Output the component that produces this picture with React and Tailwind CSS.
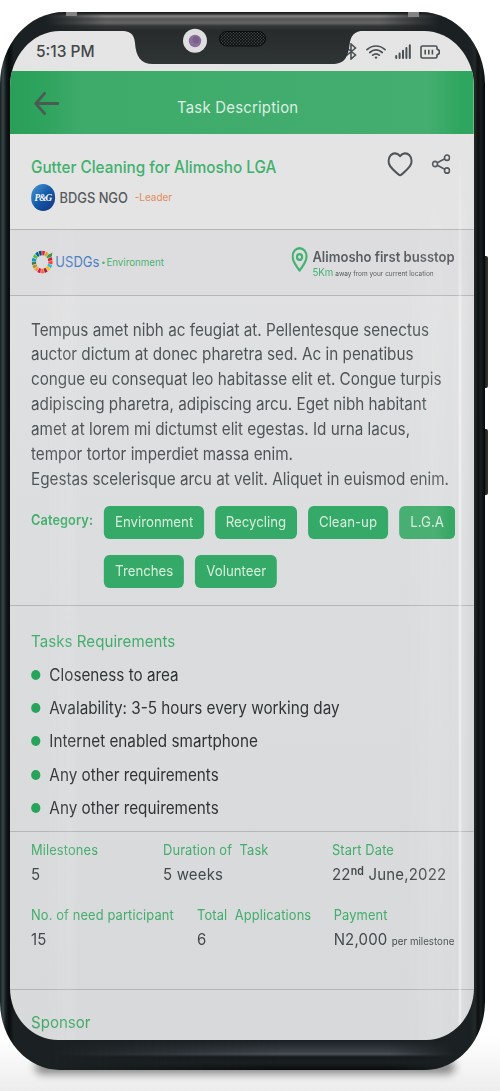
import React from 'react';

const SDG_COLORS = ['#e5243b', '#dda63a', '#4c9f38', '#c5192d', '#ff3a21', '#26bde2', '#fcc30b', '#a21942', '#fd6925', '#dd1367', '#fd9d24', '#bf8b2e', '#3f7e44', '#0a97d9', '#56c02b', '#00689d', '#19486a'];

const PARAGRAPH = [
  'Tempus amet nibh ac feugiat at. Pellentesque senectus',
  'auctor dictum at donec pharetra sed. Ac in penatibus',
  'congue eu consequat leo habitasse elit et. Congue turpis',
  'adipiscing pharetra, adipiscing arcu. Eget nibh habitant',
  'amet at lorem mi dictumst elit egestas. Id urna lacus,',
  'tempor tortor imperdiet massa enim.',
  'Egestas scelerisque arcu at velit. Aliquet in euismod enim.',
];

const REQUIREMENTS = [
  'Closeness to area',
  'Avalability: 3-5 hours every working day',
  'Internet enabled smartphone',
  'Any other requirements',
  'Any other requirements',
];

function SdgWheel() {
  const c = 2 * Math.PI * 9;
  const seg = c / 17;
  return (
    <svg className="w-[24px] h-[24px] shrink-0" viewBox="0 0 24 24" preserveAspectRatio="none" fill="none">
      {SDG_COLORS.map((color, i) => (
        <circle key={color} cx="12" cy="12" r="9" stroke={color} strokeWidth="4.6"
          strokeDasharray={`${seg - 0.6} ${c - seg + 0.6}`} transform={`rotate(${(i * 360) / 17 - 90} 12 12)`} />
      ))}
      <path d="M18 5.5L23 2.5L22.5 6.5L19.5 7.5Z" fill="#3f8f45" />
    </svg>
  );
}

function Notch() {
  return (
    <svg className="absolute left-[115px] top-[18px] w-[250px] h-[36px] overflow-visible" viewBox="115 30 250 36">
      <defs>
        <linearGradient id="notch" x1="0" y1="0" x2="0" y2="1">
          <stop offset="0" stopColor="#272b2b" />
          <stop offset="1" stopColor="#2f3435" />
        </linearGradient>
        <pattern id="mesh" width="3" height="3" patternUnits="userSpaceOnUse">
          <rect width="3" height="3" fill="#0b0d0d" />
          <circle cx="0.8" cy="0.8" r="0.7" fill="#4b4f4f" />
          <circle cx="2.3" cy="2.3" r="0.7" fill="#4b4f4f" />
        </pattern>
      </defs>
      <path d="M118 30.5C130 31 134 33 135 43C136 57 141 64 153 64H332C345 64 348 57 349.5 45C350.5 36 354 31 364 30.5Z" fill="url(#notch)" />
      <circle cx="195" cy="40.7" r="12" fill="#dedddf" />
      <circle cx="195" cy="41" r="6.2" fill="#8b6f9b" />
      <circle cx="196" cy="40" r="3.4" fill="#79608b" />
      <rect x="219.5" y="31.5" width="46" height="14.5" rx="7.2" fill="url(#mesh)" stroke="#0b0d0d" strokeWidth="1" />
    </svg>
  );
}

function StatusBar() {
  return (
    <div className="relative h-[40px] flex items-start justify-between pl-[26px] pr-[34px] pt-[11px]">
      <span className="text-[15.5px] leading-[20px] font-medium text-[#43474a]">5:13 PM</span>
      <div className="flex items-center h-[20px] gap-[9px] text-[#4b5054]">
        <svg className="w-[11px] h-[17px]" viewBox="0 0 11 17" fill="none" stroke="currentColor" strokeWidth="1.6">
          <path d="M0.5 4.5L9.5 12L5 16V1L9.5 5L0.5 12.5" />
        </svg>
        <svg className="w-[20px] h-[14px]" viewBox="0 0 20 14" fill="none" stroke="currentColor" strokeWidth="1.7" strokeLinecap="round">
          <path d="M1 4.6C6.2-0.2 13.8-0.2 19 4.6M3.8 7.5C7.5 4.1 12.5 4.1 16.2 7.5M6.7 10.2C8.7 8.5 11.3 8.5 13.3 10.2" />
          <circle cx="10" cy="12.6" r="1.2" fill="currentColor" stroke="none" />
        </svg>
        <svg className="w-[16px] h-[15px]" viewBox="0 0 16 15" fill="none" stroke="currentColor" strokeWidth="2" strokeLinecap="round">
          <path d="M1.2 14V12M4.6 14V9.5M8 14V6.8M11.4 14V4M14.8 14V1.2" />
        </svg>
        <svg className="w-[20px] h-[14px]" viewBox="0 0 20 14" fill="none" stroke="currentColor" strokeWidth="1.6" strokeLinejoin="round">
          <path d="M2.5 1H15.5Q17 1 17 2.5V4L19.2 5.5V8.5L17 10V11.5Q17 13 15.5 13H2.5Q1 13 1 11.5V2.5Q1 1 2.5 1Z" />
          <path d="M5.2 4.7V9.5M8.8 4.7V9.5M12.4 4.7V9.5" />
        </svg>
      </div>
    </div>
  );
}

function Chip({ children, className }) {
  return (
    <span className={`flex items-center justify-center h-[33.5px] rounded-[6px] bg-[#35a967] text-[#d5eddd] text-[14.4px] ${className}`}>
      {children}
    </span>
  );
}

function Stat({ label, className, children }) {
  return (
    <div className={className}>
      <div className="text-[14px] leading-[24px] tracking-[0.13px] text-[#43ad6c]">{label}</div>
      <div className="text-[16.3px] leading-[24px] tracking-[0.2px] text-[#43494c]">{children}</div>
    </div>
  );
}

function Screen() {
  return (
    <div className="relative ml-[10px] w-[464px] h-[1009.5px] overflow-hidden rounded-t-[50px_56px] rounded-b-[48px_52px] bg-linear-to-b from-[#e5e5e5] via-[#dcdddf] to-[#d7d9da]">
      <StatusBar />
      <div className="w-[504.35px] origin-top-left scale-x-[0.92] whitespace-nowrap">
        <header className="relative h-[63.5px] bg-[linear-gradient(90deg,#2a9f59_0px,#2ea35d_35px,#3fab6b_80px,#43ae6f_455px,#2fa65f_490px)] flex items-center pl-[26px]">
          <svg className="w-[28px] h-[25px] mt-[3px]" viewBox="0 0 29 26" preserveAspectRatio="none" fill="none" stroke="#4b5a52" strokeWidth="3" strokeLinecap="round" strokeLinejoin="round">
            <path d="M27 13H2M12 2.5L2 13L12 23.5" />
          </svg>
          <h1 className="ml-[127.5px] mt-[10px] text-[16.2px] tracking-[0.25px] text-[#dcefe2]">Task Description</h1>
        </header>

        <section className="h-[95.5px] bg-[#e4e4e4] border-b border-[#b5b5b7] pl-[22.8px] pr-[25px] pt-[16.5px]">
          <div className="flex justify-between">
            <h2 className="mt-[4px] text-[16.6px] leading-[24px] tracking-[0.03px] font-medium text-[#40b16d]">Gutter Cleaning for Alimosho LGA</h2>
            <div className="flex items-center h-[27px] gap-[20px] text-[#50565a]">
              <svg className="w-[28px] h-[25px]" viewBox="0 0 28 25" preserveAspectRatio="none" fill="none" stroke="currentColor" strokeWidth="2.2" strokeLinejoin="round">
                <path d="M14 4.2C11.5 0.8 6.5 0.5 3.8 3.3C0.8 6.3 0.8 11 3.3 14.2C6 17.8 10 20.5 12.6 22.6Q14 23.6 15.4 22.6C18 20.5 22 17.8 24.7 14.2C27.2 11 27.2 6.3 24.2 3.3C21.5 0.5 16.5 0.8 14 4.2Z" />
              </svg>
              <svg className="w-[21px] h-[20px]" viewBox="0 0 21 20" preserveAspectRatio="none" fill="none" stroke="currentColor" strokeWidth="1.7">
                <circle cx="4" cy="10" r="2.7" /><circle cx="17" cy="3.7" r="2.7" /><circle cx="17" cy="16.5" r="2.7" />
                <path d="M6.4 8.8L14.6 4.8M6.4 11.2L14.6 15.3" />
              </svg>
            </div>
          </div>
          <div className="flex items-center h-[27px] mt-[5.5px]">
            <span className="flex items-center justify-center w-[26px] h-[26.5px] rounded-full bg-linear-to-br from-[#4f9bd4] via-[#1459a9] to-[#12307f] text-white font-['Liberation_Serif',serif] italic font-bold text-[10px] tracking-[-1px]">P&amp;G</span>
            <span className="ml-[5px] text-[14px] font-medium text-[#54595c]">BDGS NGO</span>
            <span className="ml-[7.5px] mt-[1px] text-[10.8px] text-[#e58a59]">-Leader</span>
          </div>
        </section>

        <section className="h-[66px] border-b border-[#b5b6b8] bg-[#dddddf] flex items-center justify-between pl-[22.8px] pr-[21px]">
          <div className="flex items-center">
            <SdgWheel />
            <span className="ml-[2.5px] text-[14.2px] text-[#4a7fc4]">USDGs</span>
            <span className="ml-[2px] mt-[1px] text-[10.6px] text-[#4bb374]"><span className="mr-[1px] text-[8px] align-[1px]">•</span>Environment</span>
          </div>
          <div className="flex items-start gap-[5px]">
            <svg className="w-[17.5px] h-[25px] mt-[5px]" viewBox="0 0 18 25" preserveAspectRatio="none" fill="none" stroke="#43b272" strokeWidth="2.4">
              <path d="M9 23.5C6.5 20 1.2 15.5 1.2 9.5C1.2 4.5 4.7 1.2 9 1.2S16.8 4.5 16.8 9.5C16.8 15.5 11.5 20 9 23.5Z" strokeLinejoin="round" />
              <circle cx="9" cy="10" r="2.9" />
            </svg>
            <div className="pt-[6.5px]">
              <div className="text-[14.2px] leading-[17px] font-semibold text-[#5a5e62]">Alimosho first busstop</div>
              <div className="text-[7.1px] leading-[16px] text-[#565a5d]"><span className="text-[10.6px] text-[#43b272]">5Km</span> away from your current location</div>
            </div>
          </div>
        </section>

        <section className="h-[310px] border-b border-[#b5b6b8] pl-[22.8px] pt-[22px]">
          <div className="text-[16.6px] leading-[24.85px] text-[#4e5457]">
            {PARAGRAPH.map((line) => <div key={line}>{line}</div>)}
          </div>
          <div className="flex mt-[14.1px]">
            <div className="w-[79.6px] pt-[4px] text-[13.9px] leading-[20px] tracking-[0.1px] font-semibold text-[#40ae6b]">Category:</div>
            <div className="flex flex-col gap-[15.5px]">
              <div className="flex gap-[12px]">
                <Chip className="w-[108.5px]">Environment</Chip>
                <Chip className="w-[89px]">Recycling</Chip>
                <Chip className="w-[87px]">Clean-up</Chip>
                <Chip className="w-[61px] bg-linear-to-r from-[#48b074] to-[#2aa25b]">L.G.A</Chip>
              </div>
              <div className="flex gap-[12px]">
                <Chip className="w-[87px]">Trenches</Chip>
                <Chip className="w-[89px]">Volunteer</Chip>
              </div>
            </div>
          </div>
        </section>

        <section className="h-[226px] border-b border-[#b5b6b8] pl-[22.8px] pt-[23px]">
          <h3 className="text-[16.4px] leading-[24px] tracking-[0.05px] text-[#43ae6c]">Tasks Requirements</h3>
          <ul className="mt-[6.2px]">
            {REQUIREMENTS.map((item, i) => (
              <li key={i} className="flex items-center h-[33.25px] text-[16.6px] text-[#2f3436]">
                <span className="w-[10px] h-[10px] -mt-[1px] mr-[10px] rounded-full bg-[#28a35b]" />
                {item}
              </li>
            ))}
          </ul>
        </section>

        <section className="h-[158px] border-b border-[#b2b5b7] pl-[22.8px] pt-[6.5px]">
          <div className="flex h-[65.2px]">
            <Stat className="w-[143.5px]" label="Milestones">5</Stat>
            <Stat className="w-[183.7px] whitespace-pre" label="Duration of  Task">5 weeks</Stat>
            <Stat label="Start Date">22<sup className="text-[11.5px] leading-none font-semibold align-[5px] relative top-auto">nd</sup> June,2022</Stat>
          </div>
          <div className="flex">
            <Stat className="w-[180.5px]" label="No. of need participant">15</Stat>
            <Stat className="w-[148.5px] whitespace-pre" label="Total  Applications">6</Stat>
            <Stat label="Payment">N2,000 <span className="text-[10.6px] tracking-[0px]">per milestone</span></Stat>
          </div>
        </section>

        <section className="pl-[22.8px] pt-[20.5px]">
          <h3 className="text-[16.4px] leading-[24px] text-[#43a869]">Sponsor</h3>
        </section>
      </div>
      <div className="absolute inset-0 pointer-events-none bg-[linear-gradient(90deg,transparent_30px,rgba(255,255,255,0.09)_60px,transparent_70px,transparent_390px,rgba(255,255,255,0.1)_425px,rgba(255,255,255,0.05)_440px,rgba(255,255,255,0.08)_448px,rgba(255,255,255,0.6)_450px,rgba(255,255,255,0.12)_452px,rgba(0,0,0,0.02)_464px)] [mask-image:linear-gradient(180deg,transparent_100px,black_300px)]" />
    </div>
  );
}

export default function App() {
  return (
    <div className="relative w-[500px] h-[1091px] overflow-hidden bg-linear-to-b from-white from-95% to-[#ededee] pt-[12px] font-['Inter',sans-serif]">
      <div className="absolute left-[35px] top-[1060px] w-[420px] h-[14px] bg-black/45 blur-[4px] rounded-full" />
      <div className="absolute left-[483px] top-[256px] w-[5px] h-[132px] rounded-r-[2px] bg-linear-to-r from-[#111] to-[#3a3736]" />
      <div className="absolute left-[483px] top-[429px] w-[5px] h-[66px] rounded-r-[2px] bg-linear-to-r from-[#111] to-[#3a3736]" />
      <div className="relative w-[485px] h-[1058px] pt-[18.5px] overflow-hidden rounded-t-[64px_72px] rounded-b-[60px_68px] bg-[linear-gradient(90deg,#17201f_0px,#39464a_3px,#141b1d_6px,#080b0b_9px,#1b2022_14px,#1b2022_470px,#222928_475px,#0d1010_478px,#1b1e1e_481px,#060808_485px)]">
        <div className="absolute left-[45px] right-[45px] top-0 h-[19px] bg-[linear-gradient(180deg,#111_0px,#343434_2px,#858585_4px,#555_7px,#666_11px,#333636_14px,#272b2b_19px)] [mask-image:linear-gradient(90deg,transparent,black_60px,black_335px,transparent)]" />
        <div className="absolute left-[50px] right-[30px] bottom-0 h-[31px] bg-[linear-gradient(180deg,#171c1f_0px,#3b4049_13px,#4b515a_15px,#14191b_18px,#1a1f21_24px,#080b0b_31px)] [mask-image:linear-gradient(90deg,transparent,black_230px,black_340px,transparent)]" />
        <div className="absolute left-[66px] top-0 w-[11px] h-[4px] bg-[#838383]" />
        <div className="absolute left-[408px] top-0 w-[11px] h-[5px] bg-[#838383]" />
        <Screen />
        <Notch />
      </div>
    </div>
  );
}
